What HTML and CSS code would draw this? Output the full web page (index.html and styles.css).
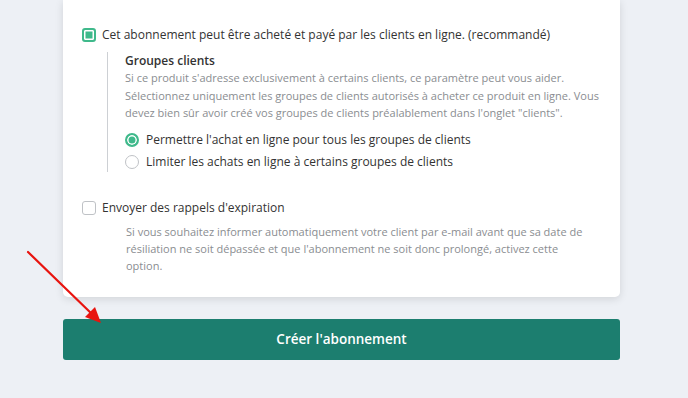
FILE: index.html
```html
<!DOCTYPE html>
<html lang="fr">
<head>
    <meta charset="UTF-8">
    <meta name="viewport" content="width=device-width, initial-scale=1.0">
    <title>Abonnement</title>
    <link rel="stylesheet" href="styles.css">
</head>
<body>
    <div class="page">
        <div class="card">
            <div class="option">
                <label class="check-row">
                    <span class="box checked"></span>
                    <span>Cet abonnement peut être acheté et payé par les clients en ligne. (recommandé)</span>
                </label>
                <div class="sub">
                    <h3>Groupes clients</h3>
                    <p class="help">Si ce produit s'adresse exclusivement à certains clients, ce paramètre peut vous aider. Sélectionnez uniquement les groupes de clients autorisés à acheter ce produit en ligne. Vous devez bien sûr avoir créé vos groupes de clients préalablement dans l'onglet "clients".</p>
                    <label class="radio-row">
                        <span class="radio on"></span>
                        <span>Permettre l'achat en ligne pour tous les groupes de clients</span>
                    </label>
                    <label class="radio-row">
                        <span class="radio"></span>
                        <span>Limiter les achats en ligne à certains groupes de clients</span>
                    </label>
                </div>
            </div>

            <div class="option">
                <label class="check-row">
                    <span class="box"></span>
                    <span>Envoyer des rappels d'expiration</span>
                </label>
                <p class="help indent">Si vous souhaitez informer automatiquement votre client par e-mail avant que sa date de résiliation ne soit dépassée et que l'abonnement ne soit donc prolongé, activez cette option.</p>
            </div>
        </div>

        <button class="submit">Créer l'abonnement</button>
    </div>

    <!-- flèche d'annotation -->
    <svg class="arrow" width="120" height="90" viewBox="0 240 120 90">
        <line x1="28" y1="252" x2="94" y2="316" stroke="#e8140f" stroke-width="2.2" stroke-linecap="round"/>
        <polygon points="101,323 85,317 95,307" fill="#e8140f"/>
    </svg>
</body>
</html>
```

FILE: styles.css
```css
body {
    margin: 0;
    font-family: "Open Sans", Arial, sans-serif;
    background-color: #edf0f5;
    color: #333;
}
.page {
    width: 557px;
    margin-left: 63px;
}
.card {
    background-color: white;
    border-radius: 0 0 5px 5px;
    box-shadow: 0 2px 8px rgba(0, 0, 0, 0.12);
    padding: 26px 19px 23px 19px;
}
.option {
    margin-bottom: 27px;
}
.option:last-child {
    margin-bottom: 0;
}
.check-row, .radio-row {
    display: flex;
    align-items: center;
    font-size: 12px;
    line-height: 18px;
}
.box {
    width: 14px;
    height: 14px;
    box-sizing: border-box;
    border: 1px solid #bfc2c6;
    border-radius: 3px;
    margin-right: 6px;
    flex-shrink: 0;
}
.box.checked {
    border: 2px solid #3fb98b;
    background-color: #3fb98b;
    box-shadow: inset 0 0 0 1.5px white;
}
.sub {
    margin: 8px 0 0 25px;
    border-left: 1px solid #cdd0d4;
    padding: 0 0 1px 17px;
}
.sub h3 {
    font-size: 12px;
    font-weight: 600;
    margin: 0;
    line-height: 17px;
}
.help {
    font-size: 11px;
    line-height: 17.5px;
    color: #8a8d91;
    margin: 0 0 9.5px;
}
.help.indent {
    margin: 5.5px 12px 0 44px;
    line-height: 17px;
}
.radio-row + .radio-row {
    margin-top: 4px;
}
.radio {
    width: 14px;
    height: 14px;
    box-sizing: border-box;
    border: 1.5px solid #bfc2c6;
    border-radius: 50%;
    margin-right: 7px;
    flex-shrink: 0;
}
.radio.on {
    border: 2px solid #3fb98b;
    background-color: #3fb98b;
    box-shadow: inset 0 0 0 1.5px white;
}
.submit {
    display: block;
    width: 100%;
    height: 41px;
    margin-top: 22px;
    border: none;
    border-radius: 3px;
    background-color: #1c7e6f;
    color: white;
    font-family: "Open Sans", Arial, sans-serif;
    font-size: 13.5px;
    font-weight: 600;
}
.arrow {
    position: absolute;
    left: 0;
    top: 240px;
}
```
